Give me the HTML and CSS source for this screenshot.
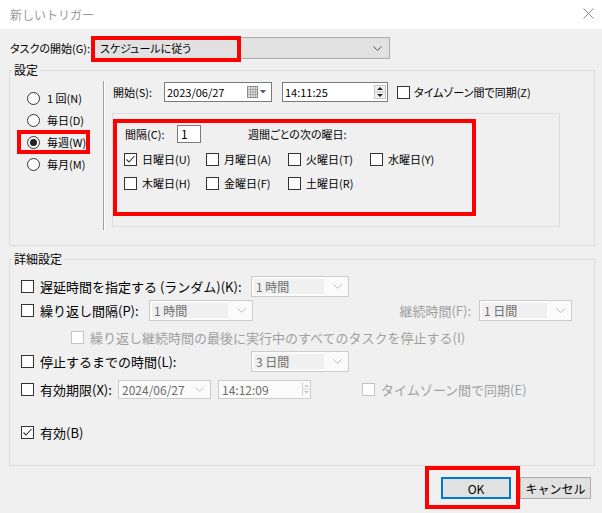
FILE: index.html
```html
<!DOCTYPE html>
<html lang="ja">
<head>
  <meta charset="UTF-8">
  <title>新しいトリガー</title>
  <link rel="stylesheet" href="styles.css">
</head>
<body>
<div class="window">

  <div class="titlebar">
    <span class="title">新しいトリガー</span>
    <svg class="close" width="11" height="11" viewBox="0 0 11 11">
      <path d="M0.5 0.5 L10.5 10.5 M10.5 0.5 L0.5 10.5" stroke="#8a8a8a" stroke-width="1" fill="none"/>
    </svg>
  </div>

  <div class="content">
    <div class="start-row">
      <span class="start-label">タスクの開始(G):</span>
      <div class="combo">
        <span>スケジュールに従う</span>
        <svg width="9" height="5" viewBox="0 0 9 5"><polyline points="0.5,0.5 4.5,4.5 8.5,0.5" stroke="#555" fill="none"/></svg>
      </div>
    </div>

    <!-- 設定 -->
    <fieldset class="group">
      <legend>設定</legend>
      <div class="settings-body">
        <div class="radios">
          <div class="radio-row"><span class="radio"></span>1 回(N)</div>
          <div class="radio-row"><span class="radio"></span>毎日(D)</div>
          <div class="radio-row"><span class="radio on"></span>毎週(W)</div>
          <div class="radio-row"><span class="radio"></span>毎月(M)</div>
        </div>
        <div class="sep"></div>
        <div class="schedule">
          <div class="start-line">
            <span class="lbl-start">開始(S):</span>
            <div class="field date">
              <span>2023/06/27</span>
              <svg class="cal" width="19" height="12" viewBox="0 0 19 12">
                <rect x="0.5" y="0.5" width="10" height="11" fill="#e4e4e4" stroke="#8c8c8c"/>
                <path d="M1 3.5 H10 M1 6 H10 M1 8.5 H10 M3.5 1 V11 M6 1 V11 M8.5 1 V11" stroke="#a8a8a8" stroke-width="1"/>
                <polygon points="13,4 19,4 16,7.5" fill="#4b5d7d"/>
              </svg>
            </div>
            <div class="field time">
              <span>14:11:25</span>
              <svg class="spin" width="12" height="14" viewBox="0 0 12 14">
                <rect x="0.5" y="0.5" width="11" height="13" fill="#f0f0f0" stroke="#c8c8c8"/>
                <path d="M1 7 H11" stroke="#c8c8c8"/>
                <polygon points="3,5 9,5 6,2" fill="#222"/>
                <polygon points="3,9 9,9 6,12" fill="#222"/>
              </svg>
            </div>
            <span class="cb tz"></span>
            <span class="tz-text">タイムゾーン間で同期(Z)</span>
          </div>

          <div class="weekly">
            <div class="interval">
              <span class="lbl-interval">間隔(C):</span>
              <span class="num">1</span>
              <span class="week-text">週間ごとの次の曜日:</span>
            </div>
            <div class="days">
              <div class="day">
                <span class="cb">
                  <svg width="11" height="11" viewBox="0 0 11 11"><polyline points="1.5,5.5 4,8 9.5,2" stroke="#333" stroke-width="1.1" fill="none"/></svg>
                </span>日曜日(U)
              </div>
              <div class="day"><span class="cb"></span>月曜日(A)</div>
              <div class="day"><span class="cb"></span>火曜日(T)</div>
              <div class="day"><span class="cb"></span>水曜日(Y)</div>
              <div class="day"><span class="cb"></span>木曜日(H)</div>
              <div class="day"><span class="cb"></span>金曜日(F)</div>
              <div class="day"><span class="cb"></span>土曜日(R)</div>
            </div>
          </div>
        </div>
      </div>
    </fieldset>

    <!-- 詳細設定 -->
    <fieldset class="group adv">
      <legend>詳細設定</legend>
      <div class="adv-body">
        <div class="row">
          <div class="opt w230"><span class="cb"></span>遅延時間を指定する (ランダム)(K):</div>
          <div class="dcombo w98"><span class="val">1 時間</span><svg width="9" height="5" viewBox="0 0 9 5"><polyline points="0.5,0.5 4.5,4.5 8.5,0.5" stroke="#bcbcbc" fill="none"/></svg></div>
        </div>
        <div class="row r2">
          <div class="opt w128"><span class="cb"></span>繰り返し間隔(P):</div>
          <div class="dcombo w104"><span class="val">1 時間</span><svg width="9" height="5" viewBox="0 0 9 5"><polyline points="0.5,0.5 4.5,4.5 8.5,0.5" stroke="#bcbcbc" fill="none"/></svg></div>
          <div class="duration">
            <span class="dis">継続時間(F):</span>
            <div class="dcombo w93"><span class="val">1 日間</span><svg width="9" height="5" viewBox="0 0 9 5"><polyline points="0.5,0.5 4.5,4.5 8.5,0.5" stroke="#bcbcbc" fill="none"/></svg></div>
          </div>
        </div>
        <div class="row r3">
          <div class="opt dis"><span class="cb off"></span>繰り返し継続時間の最後に実行中のすべてのタスクを停止する(I)</div>
        </div>
        <div class="row r4">
          <div class="opt w230"><span class="cb"></span>停止するまでの時間(L):</div>
          <div class="dcombo w98"><span class="val">3 日間</span><svg width="9" height="5" viewBox="0 0 9 5"><polyline points="0.5,0.5 4.5,4.5 8.5,0.5" stroke="#bcbcbc" fill="none"/></svg></div>
        </div>
        <div class="row r5">
          <div class="opt w97"><span class="cb"></span>有効期限(X):</div>
          <div class="dfield w93"><span>2024/06/27</span><svg width="9" height="5" viewBox="0 0 9 5"><polyline points="0.5,0.5 4.5,4.5 8.5,0.5" stroke="#c4c4c4" fill="none"/></svg></div>
          <div class="dfield w93 tm"><span>14:12:09</span>
            <svg width="8" height="14" viewBox="0 0 8 14">
              <path d="M0.5 0 V14 M0.5 7 H8" stroke="#d4d4d4"/>
              <polygon points="2,5 7,5 4.5,2.5" fill="#c4c4c4"/>
              <polygon points="2,9 7,9 4.5,11.5" fill="#c4c4c4"/>
            </svg>
          </div>
          <div class="opt dis tz2"><span class="cb off"></span>タイムゾーン間で同期(E)</div>
        </div>
        <div class="row r6">
          <div class="opt">
            <span class="cb">
              <svg width="11" height="11" viewBox="0 0 11 11"><polyline points="1.5,5.5 4,8 9.5,2" stroke="#333" stroke-width="1.1" fill="none"/></svg>
            </span>有効(B)
          </div>
        </div>
      </div>
    </fieldset>

    <div class="buttons">
      <button class="btn default">OK</button>
      <button class="btn cancel">キャンセル</button>
    </div>
  </div>

  <!-- annotation frames -->
  <div class="mark mark-start"></div>
  <div class="mark mark-radio"></div>
  <div class="mark mark-weekly"></div>
  <div class="mark mark-ok"></div>
</div>
</body>
</html>
```

FILE: styles.css
```css
body {
  margin: 0;
  overflow: hidden;
}

.window {
  position: relative;
  width: 602px;
  height: 513px;
  background: #f0f0f0;
  font-family: "Noto Sans CJK JP", sans-serif;
  font-size: 11px;
  color: #000;
  white-space: nowrap;
}

.titlebar {
  height: 29px;
  background: #fff;
  display: flex;
  align-items: center;
  justify-content: space-between;
  padding: 0 8px 0 10px;
  box-sizing: border-box;
}

.title {
  color: #999;
  font-size: 12px;
}

.close {
  margin-top: -2px;
}

.content {
  padding: 0 7px 0 9px;
  font-feature-settings: "palt";
}

.start-row {
  display: flex;
  align-items: center;
  margin-top: 8px;
  height: 22px;
}

.start-label {
  width: 82px;
  padding-left: 1px;
}

.combo {
  width: 298px;
  height: 22px;
  box-sizing: border-box;
  border: 1px solid #adadad;
  background: #e1e1e1;
  display: flex;
  align-items: center;
  justify-content: space-between;
  padding: 0 7px 0 7px;
}

.group {
  margin: 4px 0 0 0;
  padding: 0;
  border: 1px solid #dcdcdc;
  min-width: 0;
}

.group legend {
  margin-left: 2px;
  padding: 0 2px;
  line-height: 14px;
  font-size: 12px;
}

.settings-body {
  display: flex;
  height: 168px;
  box-sizing: border-box;
  padding-top: 4px;
}

.radios {
  width: 76px;
  padding: 6px 0 0 17px;
}

.radio-row {
  height: 22px;
  display: flex;
  align-items: center;
  gap: 7px;
}

.radio {
  width: 13px;
  height: 13px;
  box-sizing: border-box;
  border: 1px solid #333;
  border-radius: 50%;
  background: #fff;
  display: flex;
  align-items: center;
  justify-content: center;
}

.radio.on::after {
  content: "";
  width: 7px;
  height: 7px;
  border-radius: 50%;
  background: #222;
}

.sep {
  height: 149px;
  border-left: 1px solid #a0a0a0;
  border-right: 1px solid #fff;
}

.schedule {
  margin-left: 7px;
  padding-top: 1px;
}

.start-line {
  display: flex;
  align-items: center;
  height: 20px;
}

.lbl-start {
  width: 51px;
  padding-left: 1px;
}

.field {
  height: 20px;
  box-sizing: border-box;
  border: 1px solid #7a7a7a;
  background: #fff;
  display: flex;
  align-items: center;
  justify-content: space-between;
  padding: 0 1px 0 2px;
  font-feature-settings: normal;
}

.field.date {
  width: 108px;
}

.field.time {
  width: 106px;
  margin-left: 10px;
}

.cal {
  margin-right: 4px;
}

.cb {
  width: 13px;
  height: 13px;
  box-sizing: border-box;
  border: 1px solid #333;
  background: #fff;
  flex: none;
  display: flex;
  align-items: center;
  justify-content: center;
}

.cb.off {
  border-color: #c4c4c4;
}

.cb.tz {
  margin-left: 9px;
}

.tz-text {
  margin-left: 4px;
}

.weekly {
  margin-top: 11px;
  width: 448px;
  height: 114px;
  box-sizing: border-box;
  border: 1px solid #dcdcdc;
  padding: 11px 0 0 11px;
}

.interval {
  display: flex;
  align-items: center;
  height: 18px;
}

.lbl-interval {
  width: 52px;
  padding-left: 1px;
}

.num {
  width: 24px;
  height: 18px;
  box-sizing: border-box;
  border: 1px solid #7a7a7a;
  background: #fff;
  padding-left: 3px;
  line-height: 15px;
  font-size: 12px;
}

.week-text {
  margin-left: 47px;
}

.days {
  display: grid;
  grid-template-columns: repeat(4, 82px);
  grid-auto-rows: 24px;
  margin-top: 4px;
}

.day {
  display: flex;
  align-items: center;
  gap: 5px;
}

/* 詳細設定 */
.adv {
  margin-top: 6px;
}

.adv-body {
  padding: 9px 0 22px 11px;
  font-size: 13px;
  font-feature-settings: normal;
}

.row {
  display: flex;
  align-items: center;
  height: 22px;
}

.r2 { margin-top: 2px; }
.r3 { margin-top: 5px; padding-left: 50px; }
.r4 { margin-top: 2px; }
.r5 { margin-top: 6px; }
.r6 { margin-top: 21px; }

.opt {
  display: flex;
  align-items: center;
  gap: 6px;
}

.w230 { width: 230px; }
.w128 { width: 128px; }
.w97 { width: 97px; }
.w98 { width: 98px; }
.w104 { width: 104px; }
.w93 { width: 93px; }

.dis {
  color: #a0a0a0;
}

.dcombo {
  height: 21px;
  box-sizing: border-box;
  border: 1px solid #cccccc;
  background: #fbfbfb;
  display: flex;
  align-items: center;
  padding: 2px 6px 2px 2px;
  gap: 9px;
  flex: none;
}

.dcombo .val {
  flex: 1;
  height: 15px;
  background: #f0f0f0;
  color: #6d6d6d;
  padding-left: 2px;
  font-size: 12px;
  line-height: 15px;
}

.duration {
  margin-left: auto;
  margin-right: 22px;
  display: flex;
  align-items: center;
  gap: 8px;
}

.dfield {
  height: 19px;
  box-sizing: border-box;
  border: 1px solid #cccccc;
  background: #fbfbfb;
  display: flex;
  align-items: center;
  justify-content: space-between;
  padding: 0 6px 0 3px;
  color: #6d6d6d;
  font-size: 12px;
}

.dfield.tm {
  margin-left: 7px;
  padding-right: 0;
}

.tz2 {
  margin-left: 51px;
}

.buttons {
  display: flex;
  justify-content: flex-end;
  gap: 9px;
  margin-top: 11px;
  padding-right: 4px;
}

.btn {
  height: 22px;
  width: 70px;
  box-sizing: border-box;
  border: 1px solid #adadad;
  background: #e1e1e1;
  font-family: "Noto Sans CJK JP", sans-serif;
  font-size: 12px;
  color: #000;
  padding: 0;
}

.btn.default {
  border: 2px solid #0078d7;
}

.btn.cancel {
  width: 71px;
}

/* red annotation frames over the dialog */
.mark {
  position: absolute;
  border: 4px solid #f00;
  box-sizing: border-box;
}

.mark-start { left: 91px; top: 36px; width: 150px; height: 26px; }
.mark-radio { left: 17px; top: 130px; width: 73px; height: 24px; }
.mark-weekly { left: 113px; top: 119px; width: 363px; height: 97px; }
.mark-ok { left: 425px; top: 466px; width: 95px; height: 43px; }
```
